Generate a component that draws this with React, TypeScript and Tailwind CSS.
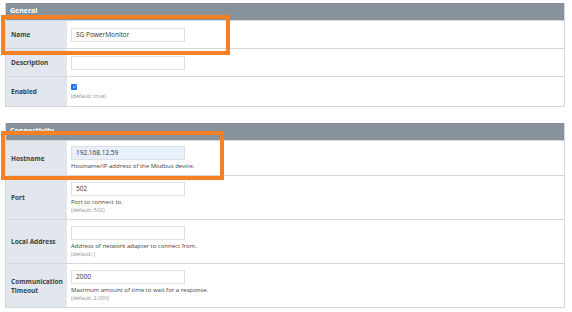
import React from 'react';

type Field = {
  label: string;
  value?: string;
  help?: string;
  def?: string;
  checkbox?: boolean;
  autofill?: boolean;
  h: string;
};

const GENERAL: Field[] = [
  { label: 'Name', value: 'SG PowerMonitor', h: 'h-[28px]' },
  { label: 'Description', value: '', h: 'h-[28px]' },
  { label: 'Enabled', checkbox: true, def: '(default: true)', h: 'h-[30px]' },
];

const CONNECTIVITY: Field[] = [
  { label: 'Hostname', value: '192.168.12.59', help: 'Hostname/IP address of the Modbus device.', autofill: true, h: 'h-[35px]' },
  { label: 'Port', value: '502', help: 'Port to connect to.', def: '(default: 502)', h: 'h-[44px]' },
  { label: 'Local Address', value: '', help: 'Address of network adapter to connect from.', def: '(default: )', h: 'h-[44px]' },
  { label: 'Communication Timeout', value: '2000', help: 'Maximum amount of time to wait for a response.', def: '(default: 2,000)', h: 'h-[44px]' },
];

function Row({ f }: { f: Field }) {
  return (
    <div className={`flex border-t border-[#d3d8dd] ${f.h}`}>
      <div className="w-[61px] shrink-0 bg-[#e1e7ed] flex items-center pl-[5px] pr-1 text-[6.5px] leading-[9px] font-bold text-[#3a3f44]">
        {f.label}
      </div>
      <div className="flex-1 bg-white flex flex-col justify-center pl-[4px]">
        {f.checkbox ? (
          <>
            <div className="w-[6px] h-[6px] rounded-[1px] bg-[#1a73e8] flex items-center justify-center">
              <svg viewBox="0 0 10 10" className="w-[5px] h-[5px]">
                <path d="M2 5.2 L4.2 7.3 L8 2.8" stroke="white" strokeWidth="1.6" fill="none" />
              </svg>
            </div>
            <div className="mt-[3px] text-[5.5px] leading-[7px] text-[#8a8f95]">{f.def}</div>
          </>
        ) : (
          <>
            <div
              className={`w-[114px] h-[14px] border border-[#dde1e5] flex items-center pl-[4px] text-[6.5px] text-[#2f3337] ${
                f.autofill ? 'bg-[#e8f0fe]' : 'bg-white'
              }`}
            >
              {f.value}
            </div>
            {f.help && <div className="mt-[2px] text-[6px] leading-[8px] text-[#3a3f44]">{f.help}</div>}
            {f.def && <div className="text-[5.5px] leading-[8px] text-[#8a8f95]">{f.def}</div>}
          </>
        )}
      </div>
    </div>
  );
}

function Section({ title, fields }: { title: string; fields: Field[] }) {
  return (
    <div className="border-x border-b border-[#d3d8dd]">
      <div className="h-[17px] bg-[#87929c] flex items-end pl-[4px] pb-[4px] text-[7px] font-bold text-white">
        {title}
      </div>
      {fields.map((f) => (
        <Row key={f.label} f={f} />
      ))}
    </div>
  );
}

export default function App() {
  return (
    <div
      className="relative w-[572px] h-[312px] bg-white pt-[3px] pl-[5px] pr-[7px]"
      style={{ fontFamily: '"Open Sans", "Noto Sans", sans-serif' }}
    >
      <Section title="General" fields={GENERAL} />
      <div className="h-[16px]" />
      <Section title="Connectivity" fields={CONNECTIVITY} />

      <div className="absolute left-[1px] top-[15px] w-[229px] h-[40px] border-[4px] border-[#f58025]" />
      <div className="absolute left-[1px] top-[131px] w-[223px] h-[49px] border-[4px] border-[#f58025]" />
    </div>
  );
}
